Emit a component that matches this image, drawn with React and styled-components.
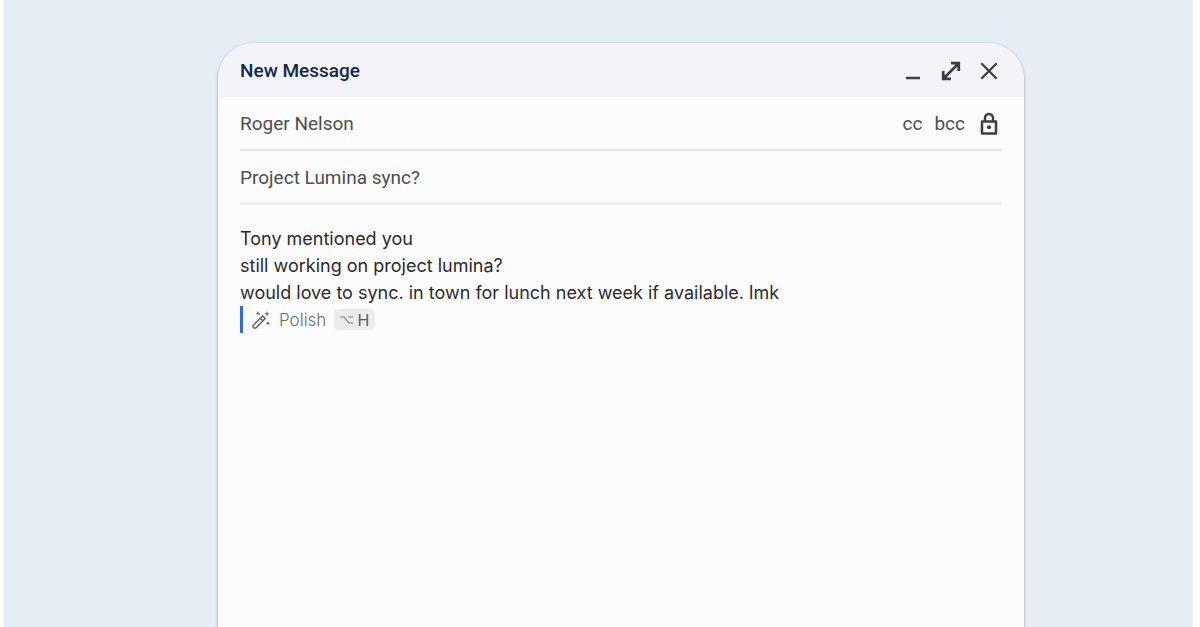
import React, { useState } from 'react';
import styled, { createGlobalStyle } from 'styled-components';

const GlobalStyle = createGlobalStyle`
  * {
    box-sizing: border-box;
  }

  body {
    margin: 0;
    background: #ffffff;
    font-family: Roboto, 'Liberation Sans', sans-serif;
    color: #444746;
  }
`;

const Backdrop = styled.main`
  display: grid;
  grid-template-columns: 214fr 806fr 169fr;
  min-height: 100vh;
  margin: 0 7px 0 4px;
  padding-top: 43px;
  background: #e6edf5;
`;

const ComposeWindow = styled.form`
  grid-column: 2;
  display: flex;
  flex-direction: column;
  min-width: 0;
  border-radius: 36px 36px 0 0;
  background: #fcfcfc;
  box-shadow: 0 1px 3px rgba(60, 64, 67, 0.55);
  overflow: hidden;
`;

const TitleBar = styled.header`
  display: flex;
  align-items: center;
  justify-content: space-between;
  height: 54px;
  padding: 2px 25px 0 22px;
  background: #f2f4f9;
`;

const Title = styled.h1`
  margin: 0;
  font-size: 19px;
  font-weight: 500;
  line-height: 24px;
  color: #14284a;
`;

const Actions = styled.div`
  display: flex;
  align-items: center;
  gap: ${props => props.$gap};
`;

const IconButton = styled.button`
  display: flex;
  padding: 0;
  border: 0;
  background: none;
  color: #3c3e40;
  cursor: pointer;
`;

const TextButton = styled.button`
  padding: 0;
  border: 0;
  background: none;
  font: inherit;
  font-size: 19px;
  line-height: 24px;
  color: #4c4f4e;
  cursor: pointer;
`;

const Field = styled.div`
  display: flex;
  align-items: center;
  height: 54px;
  margin: 0 22px;
  padding: 2px 3px 0 0;
  border-bottom: ${props => props.$rule};
`;

const FieldInput = styled.input`
  flex: 1;
  min-width: 0;
  padding: 0;
  border: 0;
  outline: 0;
  background: none;
  font: inherit;
  font-size: 19px;
  line-height: 24px;
  color: #4c4f4e;
`;

const Body = styled.div`
  flex: 1;
  padding: 20px 22px;
`;

const MessageInput = styled.textarea`
  display: block;
  width: 100%;
  height: 81px;
  padding: 0;
  border: 0;
  outline: 0;
  resize: none;
  overflow: hidden;
  background: none;
  font-family: Inter, sans-serif;
  font-size: 18px;
  line-height: 27px;
  color: #2b2b2b;
`;

const PolishHint = styled.button`
  display: flex;
  align-items: center;
  height: 27px;
  padding: 0 0 0 8px;
  border: 0;
  border-left: 3px solid #2f6be0;
  background: none;
  font-family: Inter, sans-serif;
  font-size: 17px;
  font-weight: 300;
  color: #6c6e6d;
  cursor: pointer;
`;

const HintLabel = styled.span`
  margin: 0 8px;
`;

const Shortcut = styled.kbd`
  display: flex;
  align-items: center;
  justify-content: center;
  gap: 4px;
  width: 41px;
  height: 21px;
  border-radius: 5px;
  background: #ebebeb;
  font-family: Inter, sans-serif;
  font-size: 16px;
  font-weight: 400;
  color: #5c5e5d;
`;

const MinimizeIcon = () => (
  <svg width="20" height="20" viewBox="0 0 20 20" fill="none" aria-hidden="true">
    <path d="M3 17H17" stroke="currentColor" strokeWidth="2.6" />
  </svg>
);

const ExpandIcon = () => (
  <svg width="20" height="20" viewBox="0 0 20 20" fill="none" aria-hidden="true">
    <path
      d="M10 2.2H17.8V10M17.2 2.8L2.8 17.2M2.2 10V17.8H10"
      stroke="currentColor"
      strokeWidth="2.7"
    />
    <path d="M11 1H19V9ZM1 11V19H9Z" fill="currentColor" opacity="0.35" />
  </svg>
);

const CloseIcon = () => (
  <svg width="20" height="20" viewBox="0 0 20 20" fill="none" aria-hidden="true">
    <path d="M2.3 2.3L17.7 17.7M17.7 2.3L2.3 17.7" stroke="currentColor" strokeWidth="2.2" />
  </svg>
);

const LockIcon = () => (
  <svg width="20" height="24" viewBox="0 0 20 24" fill="none" aria-hidden="true">
    <path
      d="M3 9.4H17V21.4H3ZM6 9V6A4 4 0 0 1 14 6V9"
      stroke="currentColor"
      strokeWidth="2.5"
      strokeLinejoin="round"
    />
    <circle cx="10" cy="15.2" r="2" fill="currentColor" />
  </svg>
);

const WandIcon = () => (
  <svg width="20" height="20" viewBox="0 0 20 20" fill="none" aria-hidden="true">
    <path
      d="M2.4 15.2L11.6 6L14.2 8.6L5 17.8Q3.7 18.6 2.4 17.6Q1.5 16.4 2.4 15.2ZM9.3 8.3L11.9 10.9"
      stroke="currentColor"
      strokeWidth="1.6"
    />
    <path
      d="M7 1.2L7.7 2.8L9.3 3.5L7.7 4.2L7 5.8L6.3 4.2L4.7 3.5L6.3 2.8ZM16 1L16.8 3L18.8 3.8L16.8 4.6L16 6.6L15.2 4.6L13.2 3.8L15.2 3ZM17 11L17.7 12.6L19.3 13.3L17.7 14L17 15.6L16.3 14L14.7 13.3L16.3 12.6Z"
      fill="currentColor"
    />
  </svg>
);

const OptionIcon = () => (
  <svg width="13" height="10" viewBox="0 0 13 10" fill="none" aria-hidden="true">
    <path d="M0 2H4L9 8H13M8 2H13" stroke="currentColor" strokeWidth="1.2" opacity="0.75" />
  </svg>
);

const App = () => {
  const [recipient, setRecipient] = useState('Roger Nelson');
  const [subject, setSubject] = useState('Project Lumina sync?');
  const [message, setMessage] = useState(
    'Tony mentioned you\nstill working on project lumina?\nwould love to sync. in town for lunch next week if available. lmk'
  );

  return (
    <>
      <GlobalStyle />
      <Backdrop>
        <ComposeWindow onSubmit={e => e.preventDefault()}>
          <TitleBar>
            <Title>New Message</Title>
            <Actions $gap="18px">
              <IconButton type="button" aria-label="Minimize">
                <MinimizeIcon />
              </IconButton>
              <IconButton type="button" aria-label="Full screen">
                <ExpandIcon />
              </IconButton>
              <IconButton type="button" aria-label="Close">
                <CloseIcon />
              </IconButton>
            </Actions>
          </TitleBar>

          <Field $rule="2px solid #e4e4e4">
            <FieldInput
              aria-label="To"
              value={recipient}
              onChange={e => setRecipient(e.target.value)}
            />
            <Actions $gap="14px">
              <Actions $gap="12px">
                <TextButton type="button">cc</TextButton>
                <TextButton type="button">bcc</TextButton>
              </Actions>
              <IconButton type="button" aria-label="Encryption">
                <LockIcon />
              </IconButton>
            </Actions>
          </Field>

          <Field $rule="3px solid #efefef">
            <FieldInput
              aria-label="Subject"
              value={subject}
              onChange={e => setSubject(e.target.value)}
            />
          </Field>

          <Body>
            <MessageInput
              aria-label="Message"
              value={message}
              onChange={e => setMessage(e.target.value)}
            />
            <PolishHint type="button">
              <WandIcon />
              <HintLabel>Polish</HintLabel>
              <Shortcut>
                <OptionIcon />
                H
              </Shortcut>
            </PolishHint>
          </Body>
        </ComposeWindow>
      </Backdrop>
    </>
  );
};

export default App;
